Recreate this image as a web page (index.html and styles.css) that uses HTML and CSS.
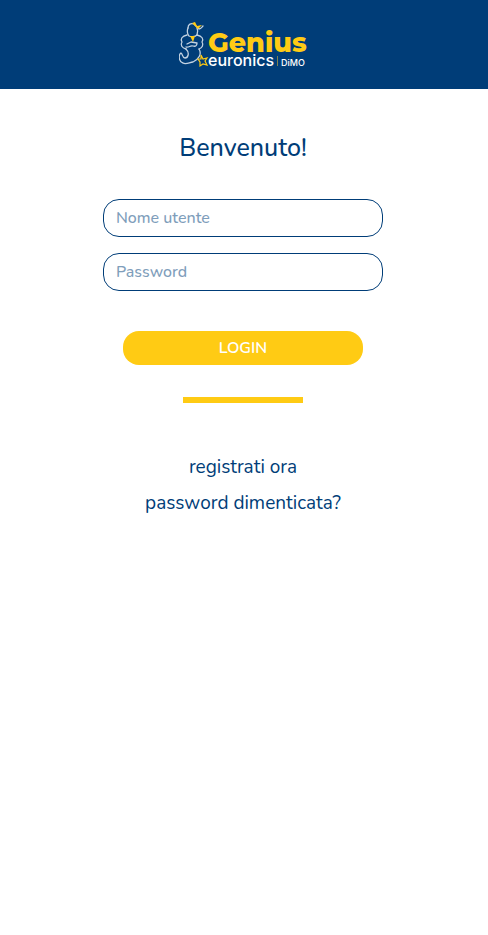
FILE: index.html
```
<!DOCTYPE html>
<html lang="it">
<head>
    <meta charset="UTF-8">
    <meta name="viewport" content="width=device-width, initial-scale=1.0">
    <title>Genius - Login</title>
    <link rel="stylesheet" href="styles.css">
</head>
<body>
    <header class="header">
        <svg class="logo" viewBox="0 0 130 49" role="img" aria-label="Genius euronics DIMO">
            <!-- genie -->
            <g fill="none" stroke="#c3d3e2" stroke-width="1.3" stroke-linecap="round" stroke-linejoin="round">
                <path d="M9 8C8 10 8 14 10 16C12 17 16 17 18 15C19 12 19 10 18 8"/>
                <path d="M9 8C9 4 12 3 15 4L20 9C22 9 23 7 24 6"/>
                <path d="M8 15C3 16 1 19 3 22C1 25 3 28 7 29M18 15C23 16 25 19 23 22C25 25 23 28 20 29"/>
                <path d="M8 24L12 22L18 23M7 27C10 28 11 25 14 26C17 27 18 25 18 23"/>
                <path d="M7 29C11 33 9 38 6 38C3 38 4 34 2 33C-1 35 0 42 4 43C7 45 11 42 14 42C20 39 23 34 20 29"/>
            </g>
            <path d="M13 3L16 2L18 6L23 5L19 9Z" fill="#ffcb14"/>
            <path d="M11 16L16 16L14 22Z" fill="#ffcb14"/>
            <path d="M22 35L24 39L28 38L26 41L28 45L24 44L21 46L21 42L19 39L22 39Z" fill="none" stroke="#ffcb14" stroke-width="1.2"/>
            <text class="logo-genius" x="29" y="32">Genius</text>
            <text class="logo-euronics" x="29" y="46">euronics</text>
            <path d="M98.500 36V46" stroke="#7d8150" stroke-width="1"/>
            <text class="logo-dimo" x="102" y="46">DiMO</text>
        </svg>
    </header>
    <main class="content">
        <h1>Benvenuto!</h1>
        <form class="login-form">
            <input type="text" name="username" placeholder="Nome utente" aria-label="Nome utente">
            <input type="password" name="password" placeholder="Password" aria-label="Password">
            <button type="submit">LOGIN</button>
        </form>
        <hr class="divider">
        <nav class="links">
            <a href="#">registrati ora</a>
            <a href="#">password dimenticata?</a>
        </nav>
    </main>
</body>
</html>
```

FILE: styles.css
```
* { box-sizing: border-box; }
body { margin: 0; font-family: Nunito, "Open Sans", sans-serif; background-color: #fff; color: #003d78; }
.header { display: flex; justify-content: center; padding: 20px; background-color: #003d78; }
.logo { width: 130px; height: 49px; }
.logo-genius { font: 800 27px Montserrat, Inter, sans-serif; fill: #ffcb14; }
.logo-euronics { font: 500 16px Inter, sans-serif; fill: #fff; }
.logo-dimo { font: 500 9px Inter, sans-serif; fill: #fff; }
.content { display: flex; flex-direction: column; align-items: center; padding: 40px 22px 40px 20px; }
h1 { margin: 0; font-size: 25px; line-height: 38px; font-weight: 500; }
.login-form { display: flex; flex-direction: column; align-items: center; gap: 16px; width: 100%; max-width: 280px; margin-top: 32px; }
.login-form input { width: 100%; height: 38px; padding: 0 12px; border: 1px solid #003d78; border-radius: 16px; background-color: #fff; color: #003d78; font: 500 16px Nunito, "Open Sans", sans-serif; }
.login-form input::placeholder { color: #7f9ebb; opacity: 1; }
.login-form button { width: 240px; height: 34px; margin-top: 24px; border: none; border-radius: 16px; background-color: #ffcb14; color: #fff; font: 600 16px Nunito, "Open Sans", sans-serif; cursor: pointer; }
.divider { width: 120px; height: 6px; margin: 32px 0 0; border: none; background-color: #ffcb14; }
.links { display: flex; flex-direction: column; align-items: center; margin-top: 46px; }
.links a { color: #003d78; font-size: 19px; line-height: 36px; text-decoration: none; }
```
